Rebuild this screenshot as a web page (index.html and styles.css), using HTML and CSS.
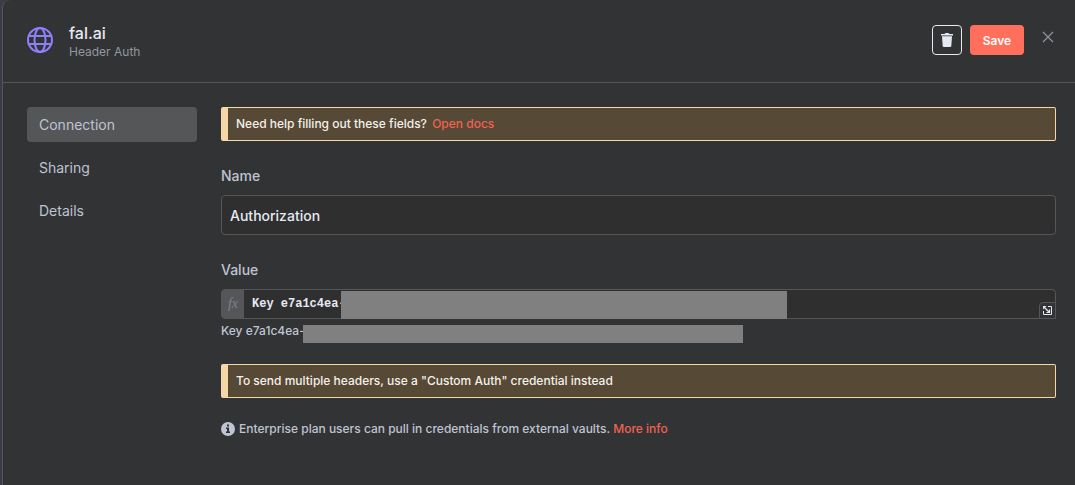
FILE: index.html
```
<!DOCTYPE html>
<html lang="en">

<head>
    <meta charset="UTF-8">
    <meta name="viewport" content="width=device-width, initial-scale=1.0">
    <title>fal.ai - Header Auth</title>
    <link rel="stylesheet" href="styles.css">
</head>

<body>
    <div class="modal">
        <header class="modal-header">
            <svg class="credential-icon" viewBox="0 0 26 26" fill="none" stroke="currentColor" stroke-width="2">
                <circle cx="13" cy="13" r="12" />
                <ellipse cx="13" cy="13" rx="5.500" ry="12" />
                <path d="M2 9h22M2 17h22" />
            </svg>
            <div class="credential-title">
                <h1>fal.ai</h1>
                <p>Header Auth</p>
            </div>
            <div class="header-actions">
                <button type="button" class="delete-button" aria-label="Delete">
                    <svg width="14" height="16" viewBox="0 0 14 16" fill="currentColor">
                        <path d="M1 2h3.500l1-1h3l1 1H13v1.600H1z" />
                        <path d="M2 4.300h10l-.7 9.700q-.1 1-1.100 1H3.800q-1 0-1.100-1z" />
                    </svg>
                </button>
                <button type="button" class="save-button">Save</button>
                <button type="button" class="close-button" aria-label="Close">
                    <svg width="12" height="12" viewBox="0 0 12 12" fill="none" stroke="currentColor" stroke-width="1.200">
                        <path d="M1 1l10 10M11 1L1 11" />
                    </svg>
                </button>
            </div>
        </header>

        <div class="modal-body">
            <nav class="sidebar">
                <a href="#connection" class="active">Connection</a>
                <a href="#sharing">Sharing</a>
                <a href="#details">Details</a>
            </nav>

            <main class="content">
                <div class="notice">Need help filling out these fields? <a href="#docs" class="docs-link">Open docs</a></div>

                <div class="form-group">
                    <label for="name">Name</label>
                    <input type="text" id="name" class="form-input" value="Authorization">
                </div>

                <div class="form-group">
                    <label for="value">Value</label>
                    <div class="expression">
                        <span class="expression-prefix">fx</span>
                        <input type="text" id="value" class="expression-input" value="Key e7a1c4ea-">
                        <span class="expression-mask"></span>
                        <button type="button" class="expand-button" aria-label="Open editor">
                            <svg width="9" height="9" viewBox="0 0 9 9" fill="none" stroke="currentColor">
                                <path d="M5 .5h3.500v8h-8V5" />
                                <path d="M1 1l5 5M6.500 3.500v3h-3" stroke-width="1.200" />
                                <path d="M0 0h3.500L0 3.500z" fill="currentColor" stroke="none" />
                            </svg>
                        </button>
                    </div>
                    <div class="preview">
                        <span class="preview-text">Key e7a1c4ea-</span>
                        <span class="preview-mask"></span>
                    </div>
                </div>

                <div class="notice">To send multiple headers, use a "Custom Auth" credential instead</div>

                <p class="vault-info">
                    <svg width="14" height="14" viewBox="0 0 14 14">
                        <circle cx="7" cy="7" r="7" fill="currentColor" />
                        <path d="M6 2.500h2v2H6zM5 5.500h3v4h1V11H5V9.500h1V7H5z" fill="#323335" />
                    </svg>
                    <span>Enterprise plan users can pull in credentials from external vaults. <a href="#vaults">More info</a></span>
                </p>
            </main>
        </div>
    </div>
</body>

</html>
```
FILE: styles.css
```
:root {
    --primary-color: #ff6f5c;
    --link-color: #ee6352;
    --background: #323335;
    --input-background: #2e2f2e;
    --border-color: #555658;
    --text-light: #e6e9f2;
    --text-base: #bfc4d2;
    --text-muted: #9297a2;
    --warning-border: #f5d7a8;
    --warning-background: #564935;
    --mask-color: #808080;
}

* {
    box-sizing: border-box;
}

body {
    margin: 0;
    padding-left: 2px;
    background: #3c3c46;
    color: var(--text-base);
    font-family: Inter, "Liberation Sans", sans-serif;
    font-size: 12px;
    font-weight: 500;
}

h1,
p {
    margin: 0;
}

a {
    color: var(--link-color);
    text-decoration: none;
}

button {
    display: flex;
    align-items: center;
    justify-content: center;
    padding: 0;
    border: none;
    background: none;
    font: inherit;
    cursor: pointer;
}

.modal {
    min-height: 100vh;
    background: var(--background);
    border-left: 1px solid var(--border-color);
    border-top-left-radius: 8px;
}

.modal-header {
    display: flex;
    align-items: flex-start;
    padding: 24px 20px 20px 24px;
    border-bottom: 1px solid var(--border-color);
}

.credential-icon {
    width: 26px;
    height: 26px;
    margin-top: 3px;
    color: #8f80fa;
}

.credential-title {
    flex: 1;
    margin-left: 16px;
}

.credential-title h1 {
    color: var(--text-light);
    font-size: 16px;
    font-weight: 500;
    line-height: 18px;
}

.credential-title p {
    color: var(--text-muted);
    font-weight: 400;
    line-height: 20px;
}

.header-actions {
    display: flex;
    gap: 8px;
    padding-top: 1px;
}

.delete-button {
    width: 30px;
    height: 30px;
    border: 1px solid var(--text-light);
    border-radius: 4px;
    color: var(--text-light);
}

.save-button {
    width: 54px;
    height: 30px;
    border-radius: 4px;
    background: var(--primary-color);
    color: #fff;
    font-weight: 600;
}

.close-button {
    width: 14px;
    height: 24px;
    margin-left: 9px;
    color: #909399;
}

.modal-body {
    display: flex;
    gap: 24px;
    padding: 24px 19px 24px 24px;
}

.sidebar {
    display: flex;
    flex-direction: column;
    gap: 8px;
    width: 170px;
}

.sidebar a {
    padding: 0 12px;
    border-radius: 4px;
    color: var(--text-base);
    font-size: 14px;
    font-weight: 400;
    line-height: 35px;
}

.sidebar a.active {
    background: var(--border-color);
}

.content {
    flex: 1;
}

.notice {
    padding: 8px;
    border: 1px solid var(--warning-border);
    border-left-width: 7px;
    border-radius: 2px;
    background: var(--warning-background);
    color: #f4f0ea;
    line-height: 16px;
}

.docs-link {
    margin-left: 2px;
}

.form-group {
    margin: 24px 0 21px;
}

.form-group label {
    display: block;
    margin-bottom: 8px;
    font-size: 14px;
    line-height: 22px;
}

.form-input {
    display: block;
    width: 100%;
    height: 40px;
    padding: 0 8px;
    border: 1px solid var(--border-color);
    border-radius: 4px;
    background: var(--input-background);
    color: var(--text-light);
    font: inherit;
    font-size: 14px;
}

.expression {
    position: relative;
    display: flex;
    height: 30px;
    border: 1px solid var(--border-color);
    border-radius: 4px 4px 0 4px;
    background: var(--input-background);
}

.expression-prefix {
    width: 22px;
    background: var(--border-color);
    color: #7d828d;
    font-family: "Liberation Serif", serif;
    font-size: 14px;
    font-style: italic;
    font-weight: 400;
    line-height: 28px;
    text-align: center;
}

.expression-input {
    width: 97px;
    padding: 0 0 0 8px;
    border: none;
    background: none;
    color: var(--text-light);
    font-family: "Liberation Mono", monospace;
    font-size: 12px;
    font-weight: 700;
}

.expression-mask {
    width: 446px;
    height: 28px;
    margin-top: 1px;
    background: var(--mask-color);
}

.expand-button {
    position: absolute;
    right: -1px;
    bottom: -1px;
    width: 17px;
    height: 17px;
    border: 1px solid var(--border-color);
    border-top-left-radius: 4px;
    background: var(--background);
    color: var(--text-light);
}

.preview {
    display: flex;
    padding-top: 4px;
    line-height: 16px;
}

.preview-text {
    width: 82px;
    white-space: nowrap;
}

.preview-mask {
    width: 440px;
    height: 18px;
    margin-top: 2px;
    background: var(--mask-color);
}

.vault-info {
    display: flex;
    align-items: center;
    gap: 4px;
    margin-top: 23px;
    line-height: 16px;
}
```
